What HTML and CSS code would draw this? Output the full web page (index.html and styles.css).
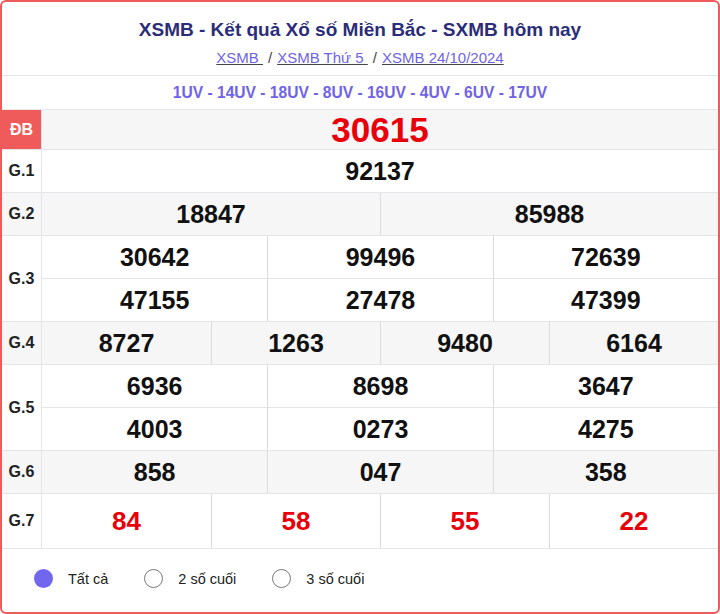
FILE: index.html
```html
<!DOCTYPE html>
<html lang="vi">
<head>
<meta charset="utf-8">
<title>XSMB</title>
<link rel="stylesheet" href="styles.css">
</head>
<body>
<div class="box">
  <div class="head">
    <h1 class="title">XSMB - Kết quả Xổ số Miền Bắc - SXMB hôm nay</h1>
    <div class="crumbs">
      <a href="#">XSMB </a><span class="sep">/</span><a href="#">XSMB Thứ 5 </a><span class="sep">/</span><a href="#">XSMB 24/10/2024</a>
    </div>
  </div>
  <div class="codes">1UV - 14UV - 18UV - 8UV - 16UV - 4UV - 6UV - 17UV</div>

  <div class="row alt db">
    <div class="lbl lbl-db">ĐB</div>
    <div class="vals c1"><div class="v v-db">30615</div></div>
  </div>
  <div class="row">
    <div class="lbl">G.1</div>
    <div class="vals c1"><div class="v">92137</div></div>
  </div>
  <div class="row alt">
    <div class="lbl">G.2</div>
    <div class="vals c2"><div class="v">18847</div><div class="v">85988</div></div>
  </div>
  <div class="row">
    <div class="lbl">G.3</div>
    <div class="vals c3">
      <div class="v">30642</div><div class="v">99496</div><div class="v">72639</div>
      <div class="v">47155</div><div class="v">27478</div><div class="v">47399</div>
    </div>
  </div>
  <div class="row alt">
    <div class="lbl">G.4</div>
    <div class="vals c4"><div class="v">8727</div><div class="v">1263</div><div class="v">9480</div><div class="v">6164</div></div>
  </div>
  <div class="row">
    <div class="lbl">G.5</div>
    <div class="vals c3">
      <div class="v">6936</div><div class="v">8698</div><div class="v">3647</div>
      <div class="v">4003</div><div class="v">0273</div><div class="v">4275</div>
    </div>
  </div>
  <div class="row alt">
    <div class="lbl">G.6</div>
    <div class="vals c3"><div class="v">858</div><div class="v">047</div><div class="v">358</div></div>
  </div>
  <div class="row g7">
    <div class="lbl">G.7</div>
    <div class="vals c4"><div class="v red">84</div><div class="v red">58</div><div class="v red">55</div><div class="v red">22</div></div>
  </div>

  <div class="foot">
    <label class="opt"><span class="radio on"></span>Tất cả</label>
    <label class="opt"><span class="radio"></span>2 số cuối</label>
    <label class="opt"><span class="radio"></span>3 số cuối</label>
  </div>
</div>
</body>
</html>
```

FILE: styles.css
```css
* { box-sizing: border-box; }
html, body { margin: 0; padding: 0; background: #fff; }
body { font-family: "Liberation Sans", Arial, sans-serif; color: #111; }

.box {
  width: 720px;
  height: 614px;
  border: 2px solid #ef5a5a;
  border-radius: 6px;
  overflow: hidden;
  display: flex;
  flex-direction: column;
}

.head {
  height: 74px;
  border-bottom: 1px solid #e6e6ec;
  text-align: center;
  padding-top: 16px;
}
.title {
  margin: 0;
  font-size: 19px;
  line-height: 24px;
  font-weight: bold;
  color: #2b2d7a;
}
.crumbs {
  margin-top: 7px;
  font-size: 15px;
  line-height: 18px;
  color: #555;
}
.crumbs a { color: #6f63e6; text-decoration: underline; text-decoration-color: #444; }
.sep { margin: 0 5px; color: #444; }

.codes {
  height: 34px;
  padding-top: 1px;
  border-bottom: 1px solid #e6e6ec;
  display: flex;
  align-items: center;
  justify-content: center;
  font-size: 15.6px;
  font-weight: bold;
  color: #6f63e6;
}

.row {
  display: flex;
  border-bottom: 1px solid #e4e4ea;
  background: #fff;
}
.row.alt { background: #f6f6f6; }
.lbl {
  width: 40px;
  flex: none;
  border-right: 1px solid #e4e4ea;
  display: flex;
  align-items: center;
  justify-content: center;
  font-size: 16px;
  font-weight: bold;
  color: #222;
}
.lbl-db { background: #ef5a5a; color: #fff; }

.vals { flex: 1; display: grid; }
.c1 { grid-template-columns: 1fr; }
.c2 { grid-template-columns: 1fr 1fr; }
.c3 { grid-template-columns: 1fr 1fr 1fr; }
.c4 { grid-template-columns: 1fr 1fr 1fr 1fr; }

.v {
  height: 42px;
  display: flex;
  align-items: center;
  justify-content: center;
  font-size: 25px;
  font-weight: bold;
  color: #111;
  border-left: 1px solid #dcdcdc;
}
.v:nth-child(1), .c2 .v:nth-child(3), .c3 .v:nth-child(4), .c4 .v:nth-child(5) { border-left: none; }
.c3:has(.v:nth-child(4)) .v:nth-child(-n+3) { height: 43px; border-bottom: 1px solid #e4e4ea; }

.db .v { height: 39px; }
.v-db { font-size: 35px; color: #e8000b; }
.g7 .v { height: 54px; font-size: 26px; }
.v.red { color: #e8000b; }

.foot {
  flex: 1;
  display: flex;
  align-items: center;
  padding-left: 32px;
  padding-bottom: 4px;
  gap: 36px;
  font-size: 14.5px;
  color: #222;
}
.opt { display: flex; align-items: center; gap: 15px; }
.radio {
  width: 19px;
  height: 19px;
  border-radius: 50%;
  border: 1px solid #777;
  background: #fff;
}
.radio.on { border: none; background: #7166ee; }
```
